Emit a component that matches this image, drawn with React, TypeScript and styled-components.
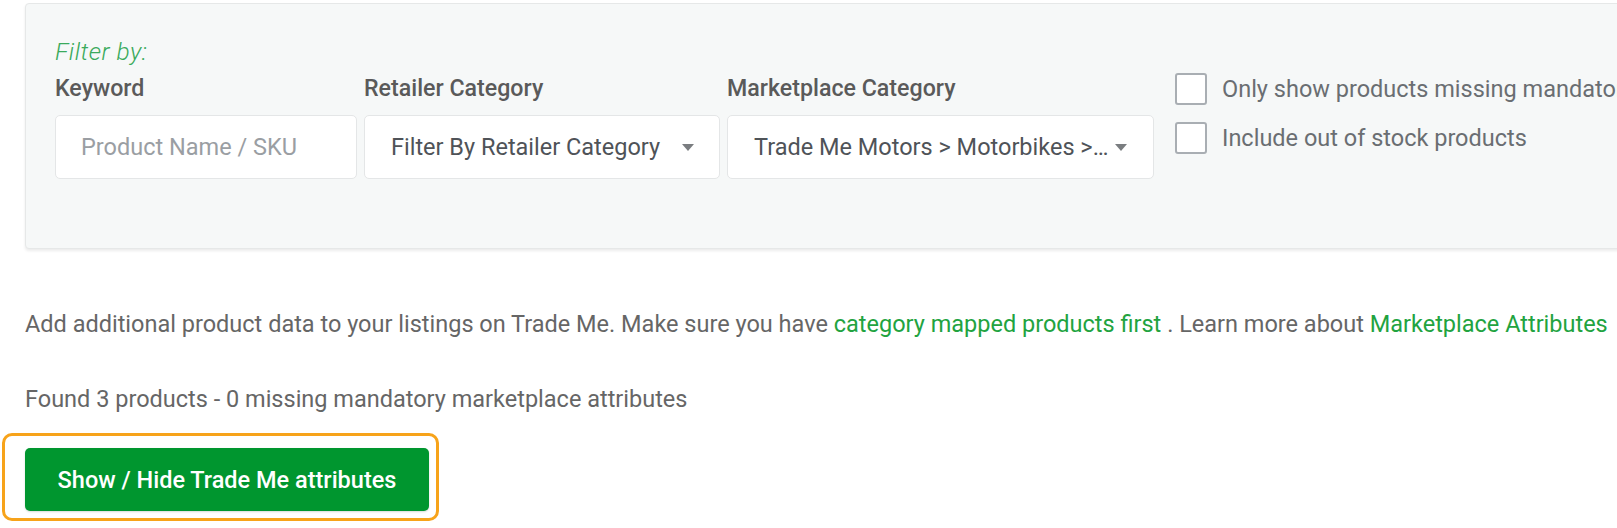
import React from "react";
import styled, { createGlobalStyle } from "styled-components";

const Global = createGlobalStyle`
    html, body {
        margin: 0;
        padding: 0;
        background: #ffffff;
        overflow: hidden;
    }
    body {
        font-family: Roboto, "Liberation Sans", sans-serif;
        color: #646464;
    }
`

const Page = styled.div`
    width: 1617px;
    height: 528px;
    padding: 3px 0 0 25px;
    box-sizing: border-box;
    overflow: hidden;
`

const FilterPanel = styled.div`
    width: 1640px;
    box-sizing: border-box;
    background: #f6f8f8;
    border: 1px solid #e6e8e8;
    border-radius: 4px;
    box-shadow: 0 2px 3px rgba(0, 0, 0, 0.08);
    padding: 33px 0 69px 29px;
`

const FilterTitle = styled.div`
    font-size: 24.5px;
    font-weight: 300;
    font-style: italic;
    letter-spacing: 0.5px;
    color: #3aaa5c;
    line-height: 30px;
`

const FieldRow = styled.div`
    display: flex;
    align-items: flex-start;
    gap: 7px;
`

const Field = styled.div<{ $width: number }>`
    display: flex;
    flex-direction: column;
    width: ${(p) => p.$width}px;
    flex: none;
`

const Label = styled.label`
    font-size: 23.2px;
    font-weight: 500;
    color: #5a5a5a;
    line-height: 30px;
    margin: 6px 0 12px;
    white-space: nowrap;
`

const TextInput = styled.input`
    height: 64px;
    box-sizing: border-box;
    border: 1px solid #e4e6e7;
    border-radius: 5px;
    background: #ffffff;
    padding: 0 25px;
    font-family: inherit;
    font-size: 23.5px;
    color: #555;
    outline: none;
    &::placeholder {
        color: #9a9ea3;
    }
`

const Select = styled.div<{ $padRight: number }>`
    height: 64px;
    box-sizing: border-box;
    border: 1px solid #e4e6e7;
    border-radius: 5px;
    background: #ffffff;
    padding: 0 ${(p) => p.$padRight}px 0 26px;
    display: flex;
    align-items: center;
    gap: 1px;
    font-size: 23.5px;
    color: #4f5358;
`

const SelectText = styled.span`
    flex: 1;
    min-width: 0;
    white-space: nowrap;
    overflow: hidden;
    text-overflow: ellipsis;
`

const Caret = styled.span`
    width: 0;
    height: 0;
    border-left: 6.5px solid transparent;
    border-right: 6.5px solid transparent;
    border-top: 7px solid #7a7d80;
    flex: none;
`

const Options = styled.div`
    display: flex;
    flex-direction: column;
    gap: 17px;
    margin: 6px 0 0 14px;
`

const Option = styled.label`
    display: flex;
    align-items: center;
    gap: 15px;
    font-size: 23.5px;
    color: #6a6e72;
    white-space: nowrap;
`

const Box = styled.span`
    width: 32px;
    height: 32px;
    box-sizing: border-box;
    border: 2px solid #a9aeb3;
    border-radius: 3px;
    background: #ffffff;
    flex: none;
`

const Text = styled.p<{ $gap: number }>`
    margin: ${(p) => p.$gap}px 0 0;
    font-size: 23.5px;
    line-height: 30px;
    color: #666666;
    white-space: nowrap;
`

const Link = styled.a`
    color: #22a33f;
    text-decoration: none;
`

const Highlight = styled.div`
    position: relative;
    display: inline-block;
    margin-top: 34px;
    &::before {
        content: "";
        position: absolute;
        left: -23px;
        top: -15px;
        right: -10px;
        bottom: -10px;
        border: 3px solid #f7a31a;
        border-radius: 10px;
        pointer-events: none;
    }
`

const ActionButton = styled.button`
    display: block;
    width: 404px;
    height: 63px;
    border: none;
    border-radius: 5px;
    background: #00962f;
    color: #ffffff;
    font-family: inherit;
    font-size: 23.5px;
    font-weight: 500;
    cursor: pointer;
    box-shadow: 0 1px 2px rgba(0, 0, 0, 0.15);
`

export default function App() {
    return (
        <>
            <Global />
            <Page>
                <FilterPanel>
                    <FilterTitle>Filter by:</FilterTitle>
                    <FieldRow>
                        <Field $width={302}>
                            <Label>Keyword</Label>
                            <TextInput placeholder="Product Name / SKU" />
                        </Field>
                        <Field $width={356}>
                            <Label>Retailer Category</Label>
                            <Select $padRight={25}>
                                <SelectText>Filter By Retailer Category</SelectText>
                                <Caret />
                            </Select>
                        </Field>
                        <Field $width={427}>
                            <Label>Marketplace Category</Label>
                            <Select $padRight={26}>
                                <SelectText>Trade Me Motors &gt; Motorbikes &gt; Motorbikes</SelectText>
                                <Caret />
                            </Select>
                        </Field>
                        <Options>
                            <Option>
                                <Box />
                                Only show products missing mandatory marketplace attributes
                            </Option>
                            <Option>
                                <Box />
                                Include out of stock products
                            </Option>
                        </Options>
                    </FieldRow>
                </FilterPanel>
                <Text $gap={60}>
                    Add additional product data to your listings on Trade Me. Make sure you have{" "}
                    <Link href="#">category mapped products first</Link> . Learn more about{" "}
                    <Link href="#">Marketplace Attributes</Link>
                </Text>
                <Text $gap={45}>Found 3 products - 0 missing mandatory marketplace attributes</Text>
                <Highlight>
                    <ActionButton>Show / Hide Trade Me attributes</ActionButton>
                </Highlight>
            </Page>
        </>
    );
}
